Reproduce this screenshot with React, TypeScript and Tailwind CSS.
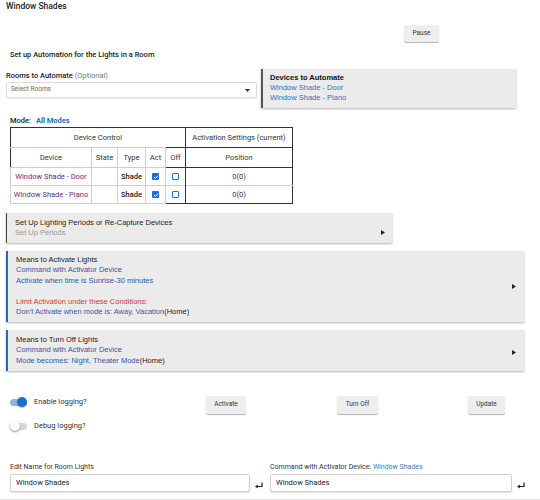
import React from 'react';

const Arrow = () => (
  <svg width="4" height="5" viewBox="0 0 4 5">
    <path d="M0 0 L4 2.5 L0 5 Z" fill="#222" />
  </svg>
);

const Enter = () => (
  <svg width="8" height="7" viewBox="0 0 8 7">
    <path d="M7 0.5 V4.5 H2" stroke="#222" strokeWidth="1.2" fill="none" />
    <path d="M0 4.5 L2.8 2.5 L2.8 6.5 Z" fill="#222" />
  </svg>
);

const Checked = () => (
  <span className="inline-flex w-[7px] h-[7px] rounded-[1px] bg-[#1a73d1] items-center justify-center align-middle">
    <svg width="6" height="6" viewBox="0 0 6 6">
      <path d="M1 3 L2.5 4.4 L5 1.6" stroke="#fff" strokeWidth="1" fill="none" />
    </svg>
  </span>
);

const Unchecked = () => (
  <span className="inline-block w-[7px] h-[7px] rounded-[1px] border border-[#1a73d1] align-middle" />
);

const Toggle = ({ on }: { on: boolean }) => (
  <div className="relative w-[17px] h-[10px] flex items-center">
    <div className={on ? 'w-[17px] h-[7px] rounded-full bg-[#8db4e6]' : 'w-[17px] h-[7px] rounded-full bg-[#d9d9d9]'} />
    {on ? (
      <div className="absolute right-0 top-0 w-[10px] h-[10px] rounded-full bg-[#1a6fd1] shadow-[0_1px_1px_rgba(0,0,0,0.3)]" />
    ) : (
      <div className="absolute left-0 top-0 w-[10px] h-[10px] rounded-full bg-white shadow-[0_1px_2px_rgba(0,0,0,0.45)]" />
    )}
  </div>
);

const Btn = ({ label, w }: { label: string; w: string }) => (
  <div className={`${w} h-[18px] bg-[#eeeeee] rounded-[2px] shadow-[0_1px_1px_rgba(0,0,0,0.3)] flex items-center justify-center text-[6.5px] text-[#333]`}>
    {label}
  </div>
);

const cell = 'border border-[#cfcfcf] text-center';

export default function App() {
  return (
    <div className="w-[540px] h-[500px] bg-white overflow-hidden font-['Roboto',sans-serif] text-[7.5px] text-[#222]">
      <div className="pl-[6px] h-[13px] leading-[13px] text-[8.5px] font-medium text-[#222]">Window Shades</div>

      <div className="mt-[12px] ml-[404px] w-[35px] h-[17px] bg-[#eeeeee] rounded-[2px] shadow-[0_1px_1px_rgba(0,0,0,0.3)] flex items-center justify-center text-[6.5px] text-[#333]">
        Pause
      </div>

      <div className="mt-[8px] pl-[10px] leading-[10px] font-medium">Set up Automation for the Lights in a Room</div>

      <div className="mt-[9px] flex">
        <div className="w-[251px] ml-[6px] pt-[2px]">
          <div className="leading-[10px]">
            <span className="font-medium">Rooms to Automate</span> <span className="text-[#777]">(Optional)</span>
          </div>
          <div className="mt-[1px] h-[16px] border border-[#dcdcdc] rounded-[2px] shadow-[0_1px_1px_rgba(0,0,0,0.08)] flex items-center justify-between pl-[4px] pr-[6px]">
            <span className="text-[6.5px] text-[#666]">Select Rooms</span>
            <svg width="5" height="3" viewBox="0 0 5 3">
              <path d="M0 0 L5 0 L2.5 3 Z" fill="#333" />
            </svg>
          </div>
        </div>
        <div className="ml-[4px] w-[255px] h-[39px] bg-[#ebebeb] border-l-2 border-[#555] shadow-[0_1px_2px_rgba(0,0,0,0.3)] pl-[7px] pt-[4px] font-['Liberation_Sans',Arial,sans-serif] leading-[10px]">
          <div className="font-bold text-[#111]">Devices to Automate</div>
          <div className="text-[#3c6fb0]">Window Shade - Door</div>
          <div className="text-[#3c6fb0]">Window Shade - Piano</div>
        </div>
      </div>

      <div className="mt-[8px] pl-[10px] leading-[10px] font-medium">
        Mode: <span className="ml-[3px] text-[#1a6fc0] font-bold">All Modes</span>
      </div>

      <div className="mt-[1px] ml-[10px]">
        <table className="border-collapse border-[1.5px] border-[#333] text-[#333]">
          <tbody>
            <tr className="h-[20px] border-b-[1.5px] border-[#333]">
              <td colSpan={5} className="text-center border-r-[1.5px] border-[#333]">Device Control</td>
              <td className="text-center w-[107px]">Activation Settings (current)</td>
            </tr>
            <tr className="h-[20px] border-b-[1.5px] border-[#333]">
              <td className={`${cell} w-[81px] border-l-0`}>Device</td>
              <td className={`${cell} w-[26px]`}>State</td>
              <td className={`${cell} w-[28px]`}>Type</td>
              <td className={`${cell} w-[20px]`}>Act</td>
              <td className="w-[20px] text-center border-r-[1.5px] border-[#333]">Off</td>
              <td className="text-center">Position</td>
            </tr>
            {['Window Shade - Door', 'Window Shade - Piano'].map((d, i) => (
              <tr key={d} className={i === 0 ? 'h-[18px] border-b border-[#cfcfcf]' : 'h-[18px]'}>
                <td className={`${cell} text-[#6e2a80]`}>{d}</td>
                <td className={cell}></td>
                <td className={`${cell} font-medium text-[#222]`}>Shade</td>
                <td className={cell}><Checked /></td>
                <td className="text-center border-r-[1.5px] border-[#333]"><Unchecked /></td>
                <td className="text-center">
                  <span className="text-[#6e2a80]">0</span>(0)
                </td>
              </tr>
            ))}
          </tbody>
        </table>
      </div>

      <div className="font-['Liberation_Sans',Arial,sans-serif]">
        <div className="mt-[9px] ml-[6px] w-[386px] h-[30px] bg-[#ebebeb] border-l border-[#444] shadow-[0_1px_2px_rgba(0,0,0,0.3)] flex items-center justify-between pl-[8px] pr-[7px]">
          <div className="leading-[10px]">
            <div className="text-[#222]">Set Up Lighting Periods or Re-Capture Devices</div>
            <div className="text-[#9a9a9a]">Set Up Periods</div>
          </div>
          <div className="mt-[8px]"><Arrow /></div>
        </div>

        <div className="mt-[8px] ml-[6px] w-[518px] h-[71px] bg-[#ebebeb] border-l-2 border-[#1f6dc2] shadow-[0_1px_2px_rgba(0,0,0,0.3)] flex items-center justify-between pl-[8px] pr-[8px]">
          <div className="leading-[10.5px] pb-[1px]">
            <div className="text-[#222]">Means to Activate Lights</div>
            <div className="text-[#3556a8]">Command with Activator Device</div>
            <div className="text-[#3556a8]">Activate when time is Sunrise-30 minutes</div>
            <div className="h-[10.5px]" />
            <div className="text-[#d23a3a]">Limit Activation under these Conditions:</div>
            <div className="text-[#3556a8]">
              Don't Activate when mode is: Away, Vacation<span className="text-[#222]">(Home)</span>
            </div>
          </div>
          <Arrow />
        </div>

        <div className="mt-[8px] ml-[6px] w-[518px] h-[41px] bg-[#ebebeb] border-l-2 border-[#1f6dc2] shadow-[0_1px_2px_rgba(0,0,0,0.3)] flex items-center justify-between pl-[8px] pr-[8px]">
          <div className="leading-[10.5px]">
            <div className="text-[#222]">Means to Turn Off Lights</div>
            <div className="text-[#3556a8]">Command with Activator Device</div>
            <div className="text-[#3556a8]">
              Mode becomes: Night, Theater Mode<span className="text-[#222]">(Home)</span>
            </div>
          </div>
          <div className="mt-[3px]"><Arrow /></div>
        </div>
      </div>

      <div className="mt-[25px] flex items-start">
        <div className="w-[206px] pl-[10px] flex flex-col gap-[12px]">
          <div className="h-[12px] flex items-center gap-[7px]">
            <Toggle on />
            <span className="text-[#333]">Enable logging?</span>
          </div>
          <div className="h-[12px] flex items-center gap-[7px]">
            <Toggle on={false} />
            <span className="text-[#333]">Debug logging?</span>
          </div>
        </div>
        <Btn label="Activate" w="w-[40px]" />
        <div className="ml-[91px]"><Btn label="Turn Off" w="w-[41px]" /></div>
        <div className="ml-[90px]"><Btn label="Update" w="w-[37px]" /></div>
      </div>

      <div className="mt-[30px] flex">
        <div className="ml-[10px] w-[260px]">
          <div className="leading-[10px] text-[7px] text-[#333]">Edit Name for Room Lights</div>
          <div className="mt-[2px] flex items-center gap-[5px]">
            <div className="w-[240px] h-[18px] border border-[#d0d0d0] rounded-[2px] shadow-[0_1px_1px_rgba(0,0,0,0.1)] flex items-center pl-[5px]">
              Window Shades
            </div>
            <div className="mt-[4px]"><Enter /></div>
          </div>
        </div>
        <div className="w-[260px]">
          <div className="leading-[10px] text-[7px] text-[#333]">
            Command with Activator Device: <span className="text-[#3a7bbf]">Window Shades</span>
          </div>
          <div className="mt-[2px] flex items-center gap-[5px]">
            <div className="w-[242px] h-[18px] border border-[#d0d0d0] rounded-[2px] shadow-[0_1px_1px_rgba(0,0,0,0.1)] flex items-center pl-[5px]">
              Window Shades
            </div>
            <div className="mt-[4px]"><Enter /></div>
          </div>
        </div>
      </div>

      <div className="mt-[7px] h-[2px] bg-[#e2e2e2] shadow-[0_1px_2px_rgba(0,0,0,0.1)]" />
    </div>
  );
}
